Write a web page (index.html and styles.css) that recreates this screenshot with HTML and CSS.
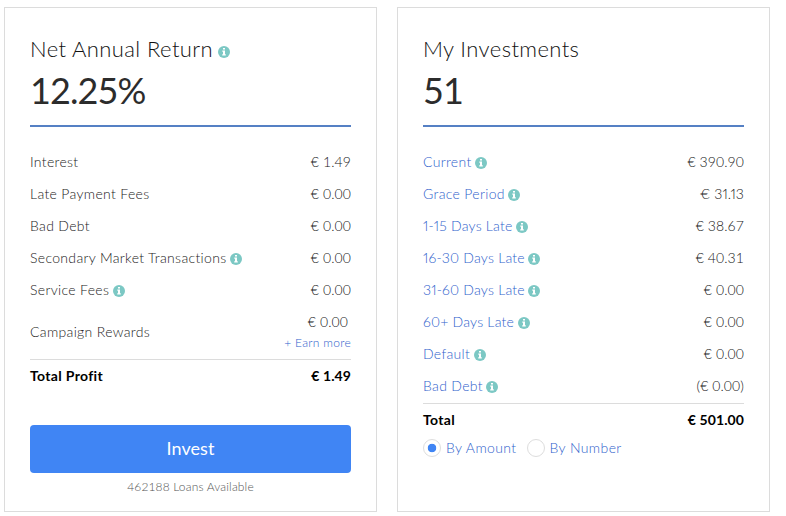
FILE: index.html
```html
<!DOCTYPE html>
<html lang="en">
  <head>
    <meta charset="UTF-8">
    <meta name="viewport" content="width=device-width, initial-scale=1.0">
    <title>Account Summary</title>
    <link rel="stylesheet" href="styles.css">
  </head>
  <body>
    <svg width="0" height="0" class="sprite">
        <symbol id="info" viewBox="0 0 12 12">
            <circle cx="6" cy="6" r="6" fill="#7cc8c4"/>
            <path fill="#fff" d="M5 2h2v1.6H5zM4.3 4.6H7v3.6h.8v1.2H4.2V8.2H5V5.8h-.7z"/>
        </symbol>
    </svg>

    <div class="overview">
        <div class="card">
            <h2><span>Net Annual Return</span> <svg class="info"><use href="#info"/></svg></h2>
            <div class="figure">12.25%</div>

            <div class="rows">
                <div class="row"><span>Interest</span><span class="value">€ 1.49</span></div>
                <div class="row"><span>Late Payment Fees</span><span class="value">€ 0.00</span></div>
                <div class="row"><span>Bad Debt</span><span class="value">€ 0.00</span></div>
                <div class="row"><span>Secondary Market Transactions</span><svg class="info"><use href="#info"/></svg><span class="value">€ 0.00</span></div>
                <div class="row"><span>Service Fees</span><svg class="info"><use href="#info"/></svg><span class="value">€ 0.00</span></div>
                <div class="row campaign">
                    <span>Campaign Rewards</span>
                    <div class="value">
                        <div class="reward">€ 0.00</div>
                        <a href="#" class="earn-more">+ Earn more</a>
                    </div>
                </div>
                <div class="row total"><span>Total Profit</span><span class="value">€ 1.49</span></div>
            </div>

            <a href="#" class="invest-button">Invest</a>
            <p class="available">462188 Loans Available</p>
        </div>

        <div class="card">
            <h2><span>My Investments</span></h2>
            <div class="figure">51</div>

            <div class="rows loans">
                <div class="row"><a href="#">Current</a><svg class="info"><use href="#info"/></svg><span class="value">€ 390.90</span></div>
                <div class="row"><a href="#">Grace Period</a><svg class="info"><use href="#info"/></svg><span class="value narrow">€ 31.13</span></div>
                <div class="row"><a href="#" class="range">1-15 Days Late</a><svg class="info"><use href="#info"/></svg><span class="value">€ 38.67</span></div>
                <div class="row"><a href="#" class="range">16-30 Days Late</a><svg class="info"><use href="#info"/></svg><span class="value">€ 40.31</span></div>
                <div class="row"><a href="#" class="range">31-60 Days Late</a><svg class="info"><use href="#info"/></svg><span class="value">€ 0.00</span></div>
                <div class="row"><a href="#" class="range">60+ Days Late</a><svg class="info"><use href="#info"/></svg><span class="value">€ 0.00</span></div>
                <div class="row"><a href="#">Default</a><svg class="info"><use href="#info"/></svg><span class="value">€ 0.00</span></div>
                <div class="row"><a href="#">Bad Debt</a><svg class="info"><use href="#info"/></svg><span class="value">(€ 0.00)</span></div>
                <div class="row total"><span>Total</span><span class="value">€ 501.00</span></div>
            </div>

            <div class="view-by">
                <label><input type="radio" name="view" checked>By Amount</label>
                <label><input type="radio" name="view">By Number</label>
            </div>
        </div>
    </div>
  </body>
</html>
```
FILE: styles.css
```css
:root {
    --link: #2f62cc;
    --button: #4085f4;
    --rule: #5580c4;
    --border: #dcdcdc;
    --text: #222;
}

* {
    box-sizing: border-box;
}

body {
    margin: 0;
    font-family: Lato, "Open Sans", sans-serif;
    font-weight: 300;
    font-size: 14px;
    letter-spacing: 0.33px;
    color: var(--text);
    background: #fff;
}

a {
    color: var(--link);
    text-decoration: none;
}

.sprite {
    position: absolute;
}

.overview {
    display: flex;
    gap: 20px;
    padding: 7px 0 0 4px;
}

.card {
    width: 373px;
    height: 505px;
    padding: 25px;
    border: 1px solid var(--border);
}

h2 {
    display: flex;
    align-items: center;
    margin: 0;
    height: 31px;
    font-size: 22px;
    font-weight: 300;
    letter-spacing: 0.4px;
    color: #111;
}

.info {
    flex: none;
    width: 12px;
    height: 12px;
    margin-left: 3.5px;
}

h2 .info {
    margin: 7px 0 0 5px;
}

.figure {
    height: 63px;
    padding-top: 3px;
    border-bottom: 2px solid var(--rule);
    font-size: 36px;
    font-weight: 400;
    line-height: 46px;
    letter-spacing: -0.9px;
    color: #2c2c2c;
}

.rows {
    padding-top: 19px;
}

.row {
    display: flex;
    align-items: center;
    height: 32px;
}

.row span,
.row a,
.reward {
    padding-bottom: 2px;
}

.row .info {
    margin-top: 1px;
}

.range {
    letter-spacing: 0.2px;
    font-variant-numeric: proportional-nums;
}

.value {
    margin-left: auto;
    letter-spacing: 0.1px;
    text-align: right;
}

.narrow {
    font-variant-numeric: proportional-nums;
}

.campaign {
    height: 53px;
}

.reward {
    padding-right: 3px;
    line-height: 20px;
}

.row .earn-more {
    display: block;
    font-size: 12px;
    line-height: 18px;
    letter-spacing: 0.3px;
}

.total {
    height: 33px;
    border-top: 1px solid var(--border);
    font-weight: 700;
    color: #000;
}

.loans .total {
    margin-top: 1px;
}

.invest-button {
    display: block;
    height: 48px;
    margin-top: 33px;
    border-radius: 4px;
    background: var(--button);
    color: #fff;
    font-size: 18px;
    font-weight: 400;
    line-height: 47px;
    letter-spacing: 0.1px;
    text-align: center;
}

.available {
    margin: 4px 0 0;
    font-size: 12px;
    line-height: 20px;
    letter-spacing: 0.15px;
    text-align: center;
    color: #555;
}

.view-by {
    display: flex;
    gap: 10px;
    letter-spacing: 0.4px;
    color: var(--link);
}

.view-by label {
    display: flex;
    align-items: center;
    height: 24px;
    padding-bottom: 1px;
}

.view-by input {
    appearance: none;
    width: 18px;
    height: 18px;
    margin: 1px 5px 0 0;
    border: 1px solid #ddd;
    border-radius: 50%;
}

.view-by input:checked {
    background: radial-gradient(circle, var(--button) 4px, #fff 4.6px);
}
```
